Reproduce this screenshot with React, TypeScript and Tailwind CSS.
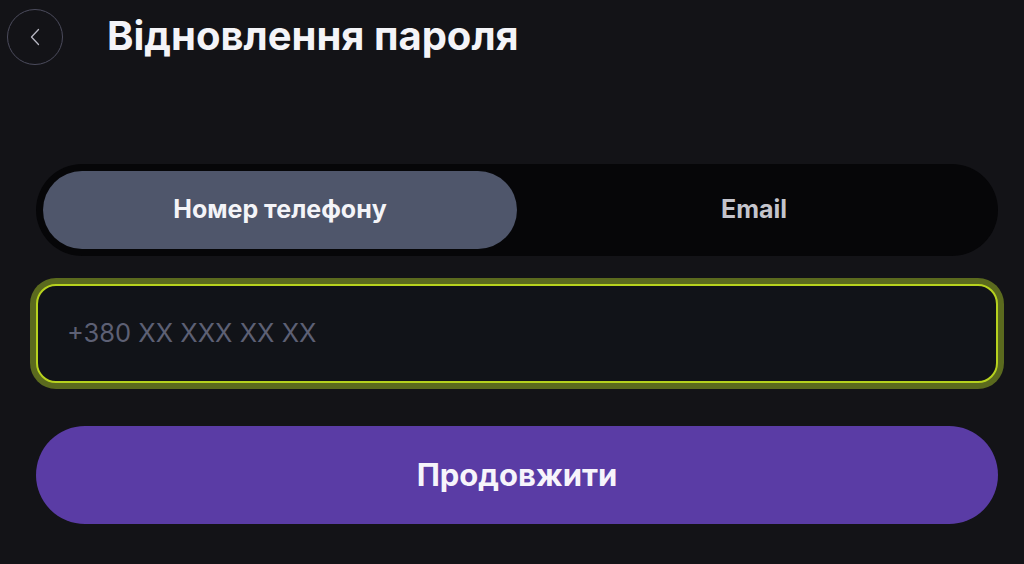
import React, { useState } from 'react';

export default function App() {
    const [tab, setTab] = useState<'phone' | 'email'>('phone');
    const [value, setValue] = useState('');

    return (
        <div className="w-full min-h-[564px] bg-[#131317] font-['Inter',sans-serif] text-white">
            {/* Header */}
            <div className="flex items-center pt-[9px] pl-[7px]">
                <button className="w-[56px] h-[56px] rounded-full border border-[#4b4b5c] flex items-center justify-center text-[#b8b8c4]">
                    <svg width="10" height="18" viewBox="0 0 10 18" fill="none">
                        <path d="M8.5 1.5L1.5 9L8.5 16.5" stroke="currentColor" strokeWidth="1.3" strokeLinecap="round" strokeLinejoin="round" />
                    </svg>
                </button>
                <h1 className="ml-[44px] text-[40px] font-bold leading-none text-[#f4f4f8] mb-[2px]">
                    Відновлення пароля
                </h1>
            </div>

            <div className="ml-[36px] w-[962px] flex flex-col">
                {/* Tabs */}
                <div className="mt-[99px] h-[92px] rounded-full bg-[#060608] p-[7px] flex">
                    <button
                        onClick={() => setTab('phone')}
                        className={
                            tab === 'phone'
                                ? 'w-[474px] rounded-full bg-[#4f566b] text-[25px] font-bold text-[#f4f4f8]'
                                : 'w-[474px] rounded-full text-[25px] font-bold text-[#c4c4cc]'
                        }
                    >
                        Номер телефону
                    </button>
                    <button
                        onClick={() => setTab('email')}
                        className={
                            tab === 'email'
                                ? 'flex-1 rounded-full bg-[#4f566b] text-[25px] font-bold text-[#f4f4f8]'
                                : 'flex-1 rounded-full text-[25px] font-bold text-[#c4c4cc]'
                        }
                    >
                        Email
                    </button>
                </div>

                {/* Input */}
                <div className="mt-[28px] h-[99px] rounded-[20px] border-2 border-[#b7d21e] ring-[6px] ring-[#5b6a1e] bg-[#111318] flex items-center px-[29px]">
                    <input
                        autoFocus
                        value={value}
                        onChange={e => setValue(e.target.value)}
                        placeholder={tab === 'phone' ? '+380 XX XXX XX XX' : 'Email'}
                        className="w-full bg-transparent outline-none text-[25.5px] text-white placeholder:text-[#5d6074] caret-[#c8e02a] font-['Inter',sans-serif]"
                    />
                </div>

                {/* Submit */}
                <button className="mt-[43px] h-[98px] rounded-full bg-[#5a3ca5] text-[31px] font-bold text-[#f6f4fb]">
                    Продовжити
                </button>
            </div>
        </div>
    );
}
